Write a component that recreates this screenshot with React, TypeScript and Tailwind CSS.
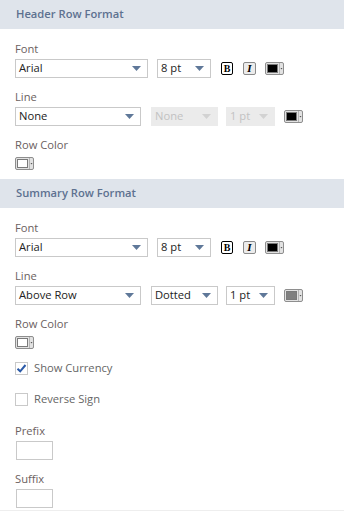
import React from 'react';

const font = "font-['Open_Sans',_'Liberation_Sans',_sans-serif]";

function SectionHeader({ title }: { title: string }) {
  return (
    <div className="flex h-[29px] items-center bg-[#dfe4eb] px-4 text-[11.2px] font-semibold text-[#5d7190]">
      {title}
    </div>
  );
}

function Label({ children }: { children: React.ReactNode }) {
  return <div className="h-[17px] text-[11.2px] leading-[17px] text-[#6b6161]">{children}</div>;
}

function Arrow({ color }: { color: string }) {
  return (
    <svg width="9" height="5" viewBox="0 0 9 5" className="shrink-0">
      <path d="M0 0H9L4.5 5Z" fill={color} />
    </svg>
  );
}

function Select({
  value,
  width,
  disabled,
}: {
  value: string;
  width: string;
  disabled?: boolean;
}) {
  return (
    <div
      className={
        'flex h-[19px] items-center justify-between border pl-[3px] pr-[6px] text-[11.2px] ' +
        width +
        (disabled
          ? ' border-[#ebebeb] bg-[#ebebeb] text-[#c2c2c2]'
          : ' border-[#c9c9c9] bg-white text-[#222]')
      }
    >
      <span>{value}</span>
      <Arrow color={disabled ? '#d2d2d2' : '#5f7899'} />
    </div>
  );
}

function BoldButton() {
  return (
    <div className="flex h-[13px] w-[12px] items-center justify-center rounded-[2px] border-[1.5px] border-black bg-white font-['Liberation_Serif',_serif] text-[10px] font-bold leading-none text-black">
      B
    </div>
  );
}

function ItalicButton() {
  return (
    <div className="flex h-[13px] w-[13px] items-center justify-center rounded-[2px] border border-[#8a8a8a] bg-[#ececec] font-['Liberation_Serif',_serif] text-[11px] font-bold italic leading-none text-black">
      I
    </div>
  );
}

function ColorPicker({ fill }: { fill: string }) {
  return (
    <svg width="19" height="13" viewBox="0 0 19 13" className="shrink-0">
      <rect x="0.5" y="0.5" width="18" height="12" rx="1.5" fill="#e2e2e2" stroke="#8e8e8e" />
      <rect x="2.5" y="2.5" width="10" height="8" fill={fill} stroke="#7a7a7a" />
      <line x1="14.5" y1="1" x2="14.5" y2="12" stroke="#b5b5b5" />
      <path d="M15.5 6H17.5L16.5 7.5Z" fill="#555" />
    </svg>
  );
}

function Checkbox({ checked, label }: { checked?: boolean; label: string }) {
  return (
    <div className="flex h-[17px] items-center gap-[6px]">
      <div className="relative h-[13px] w-[13px] border border-[#c9c9c9] bg-white">
        {checked && (
          <svg width="13" height="13" viewBox="0 0 13 13" className="absolute -left-px -top-px">
            <path d="M2.5 6.8L5.2 9.3L10.5 3" fill="none" stroke="#2b5aa8" strokeWidth="2" />
          </svg>
        )}
      </div>
      <span className="text-[11.2px] text-[#666]">{label}</span>
    </div>
  );
}

function TextBox() {
  return <div className="h-[19px] w-[37px] border border-[#c9c9c9] bg-white" />;
}

function FontRow() {
  return (
    <div className="mt-[2px] flex items-center">
      <Select value="Arial" width="w-[133px]" />
      <Select value="8 pt" width="ml-[9px] w-[54px]" />
      <div className="ml-[10px]">
        <BoldButton />
      </div>
      <div className="ml-[10px]">
        <ItalicButton />
      </div>
      <div className="ml-[9px]">
        <ColorPicker fill="#000" />
      </div>
    </div>
  );
}

export default function App() {
  return (
    <div className={'w-[344px] bg-white ' + font}>
      <SectionHeader title="Header Row Format" />
      <div className="flex flex-col gap-[10px] px-[15px] pb-[9px] pt-[11px]">
        <div>
          <Label>Font</Label>
          <FontRow />
        </div>
        <div>
          <Label>Line</Label>
          <div className="mt-[2px] flex items-center">
            <Select value="None" width="w-[126px]" />
            <Select value="None" width="ml-[10px] w-[67px]" disabled />
            <Select value="1 pt" width="ml-[8px] w-[49px]" disabled />
            <div className="ml-[9px]">
              <ColorPicker fill="#000" />
            </div>
          </div>
        </div>
        <div>
          <Label>Row Color</Label>
          <div className="mt-[4px] flex">
            <ColorPicker fill="#fff" />
          </div>
        </div>
      </div>
      <SectionHeader title="Summary Row Format" />
      <div className="flex flex-col px-[15px] pb-[2px] pt-[11px]">
        <div>
          <Label>Font</Label>
          <FontRow />
        </div>
        <div className="mt-[10px]">
          <Label>Line</Label>
          <div className="mt-[2px] flex items-center">
            <Select value="Above Row" width="w-[126px]" />
            <Select value="Dotted" width="ml-[10px] w-[67px]" />
            <Select value="1 pt" width="ml-[8px] w-[49px]" />
            <div className="ml-[9px]">
              <ColorPicker fill="#808080" />
            </div>
          </div>
        </div>
        <div className="mt-[10px]">
          <Label>Row Color</Label>
          <div className="mt-[4px] flex">
            <ColorPicker fill="#fff" />
          </div>
        </div>
        <div className="mt-[11px]">
          <Checkbox checked label="Show Currency" />
        </div>
        <div className="mt-[14px]">
          <Checkbox label="Reverse Sign" />
        </div>
        <div className="mt-[14px]">
          <Label>Prefix</Label>
          <div className="mt-[2px] pl-px">
            <TextBox />
          </div>
        </div>
        <div className="mt-[10px]">
          <Label>Suffix</Label>
          <div className="mt-[2px] pl-px">
            <TextBox />
          </div>
        </div>
      </div>
      <div className="h-[2px] bg-[#eeeeee]" />
    </div>
  );
}
